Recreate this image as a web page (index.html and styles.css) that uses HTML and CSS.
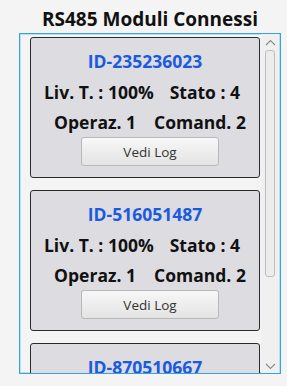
FILE: index.html
```html
<!DOCTYPE html>
<html lang="it">

<head>
    <meta charset="UTF-8">
    <meta name="viewport" content="width=device-width, initial-scale=1.0">
    <title>RS485 Moduli Connessi</title>
    <link rel="stylesheet" href="styles.css">
</head>

<body>
    <div class="window">
        <h1 class="title">RS485 Moduli Connessi</h1>

        <div class="scroll-pane">
            <div class="list">
                <div class="card">
                    <div class="module-id">ID-235236023</div>
                    <div class="row">
                        <span>Liv. T. : 100%</span>
                        <span>Stato : 4</span>
                    </div>
                    <div class="row row-ops">
                        <span>Operaz. 1</span>
                        <span>Comand. 2</span>
                    </div>
                    <button class="log-button">Vedi Log</button>
                </div>

                <div class="card">
                    <div class="module-id">ID-516051487</div>
                    <div class="row">
                        <span>Liv. T. : 100%</span>
                        <span>Stato : 4</span>
                    </div>
                    <div class="row row-ops">
                        <span>Operaz. 1</span>
                        <span>Comand. 2</span>
                    </div>
                    <button class="log-button">Vedi Log</button>
                </div>

                <!-- only the top of the third card is visible -->
                <div class="card">
                    <div class="module-id">ID-870510667</div>
                </div>
            </div>

            <!-- fake scrollbar -->
            <div class="scrollbar">
                <svg class="arrow" width="11" height="7" viewBox="0 0 11 7">
                    <polyline points="1,6 5.5,1.5 10,6" fill="none" stroke="#8a8a8a" stroke-width="1.1" />
                </svg>
                <div class="track">
                    <div class="thumb"></div>
                </div>
                <svg class="arrow" width="11" height="7" viewBox="0 0 11 7">
                    <polyline points="1,1 5.5,5.5 10,1" fill="none" stroke="#8a8a8a" stroke-width="1.1" />
                </svg>
            </div>
        </div>
    </div>
</body>

</html>
```

FILE: styles.css
```css
* {
    margin: 0;
    padding: 0;
    box-sizing: border-box;
}

body {
    background-color: #f4f4f4;
    color: #111;
    font-family: "Open Sans", "Noto Sans", Arial, sans-serif;
    width: 287px;
    height: 386px;
    overflow: hidden;
}

.window {
    margin-left: 19px;
    width: 262px;
}

/* Title */
.title {
    font-size: 19px;
    font-weight: 700;
    text-align: center;
    line-height: 24px;
    padding-top: 7px;
    height: 33px;
    color: #111;
}

/* Scroll pane */
.scroll-pane {
    display: flex;
    height: 341px;
    border: 1px solid #36a3d9;
    box-shadow: inset 0 0 0 1px #b9def0;
    background: #f4f4f4;
    overflow: hidden;
}

.list {
    flex: 1;
    display: flex;
    flex-direction: column;
    gap: 12px;
    padding: 3px 0 0 10px;
}

/* Card */
.card {
    flex-shrink: 0;
    width: 230px;
    height: 141px;
    background: #dcdce1;
    border: 1px solid #2b2b2b;
    border-radius: 3px;
    display: flex;
    flex-direction: column;
    align-items: center;
    padding-top: 12px;
}

.module-id {
    font-size: 17.5px;
    font-weight: 700;
    line-height: 22px;
    color: #1a5ae0;
}

.row {
    display: flex;
    justify-content: center;
    gap: 16px;
    font-size: 17.5px;
    font-weight: 700;
    line-height: 22px;
    margin-top: 9px;
    margin-left: -6px;
}

.row-ops {
    gap: 18px;
    margin-top: 8px;
    margin-left: 10px;
}

.log-button {
    margin-top: 4px;
    margin-left: 10px;
    width: 138px;
    height: 29px;
    border: 1px solid #b8b8b8;
    border-radius: 3px;
    background: linear-gradient(180deg, #f7f7f7, #e4e4e4);
    font-family: "Open Sans", "Noto Sans", Arial, sans-serif;
    font-size: 13.5px;
    color: #333;
}

/* Scrollbar */
.scrollbar {
    width: 18px;
    margin-right: 1px;
    display: flex;
    flex-direction: column;
    align-items: center;
    background: #f0f0f0;
    padding: 5px 0 3px;
}

.scrollbar .arrow {
    flex-shrink: 0;
}

.track {
    flex: 1;
    width: 100%;
    padding: 4px 3px 0;
}

.thumb {
    width: 10px;
    height: 227px;
    margin-left: 1px;
    background: #ececec;
    border: 1px solid #bdbdbd;
    border-radius: 3px;
}
```
